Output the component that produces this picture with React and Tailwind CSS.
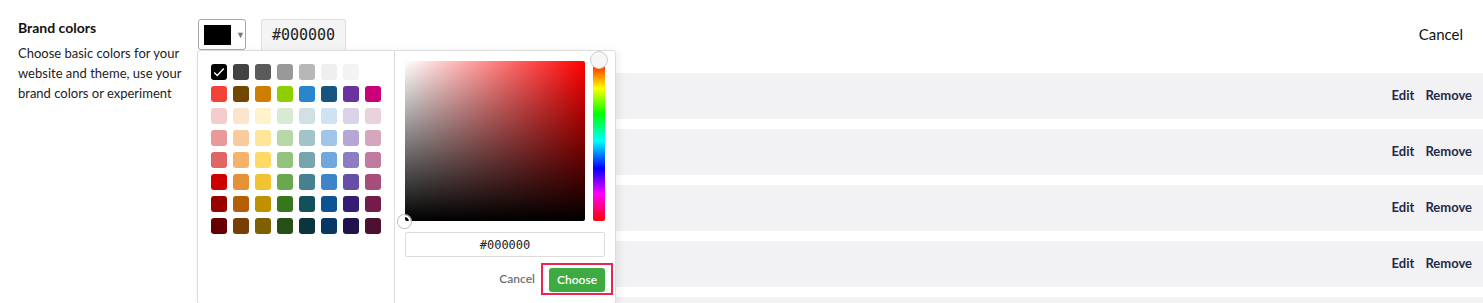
import { useState } from "react";

const palette = [
  ["#000000", "#434343", "#5b5b5b", "#999999", "#b7b7b7", "#efefef", "#f3f3f3", "#ffffff"],
  ["#f44336", "#744700", "#ce7e00", "#8fce00", "#2986cc", "#16537e", "#6a329f", "#c90076"],
  ["#f4cccc", "#fce5cd", "#fff2cc", "#d9ead3", "#d0e0e3", "#cfe2f3", "#d9d2e9", "#ead1dc"],
  ["#ea9999", "#f9cb9c", "#ffe599", "#b6d7a8", "#a2c4c9", "#9fc5e8", "#b4a7d6", "#d5a6bd"],
  ["#e06666", "#f6b26b", "#ffd966", "#93c47d", "#76a5af", "#6fa8dc", "#8e7cc3", "#c27ba0"],
  ["#cc0000", "#e69138", "#f1c232", "#6aa84f", "#45818e", "#3d85c6", "#674ea7", "#a64d79"],
  ["#990000", "#b45f06", "#bf9000", "#38761d", "#134f5c", "#0b5394", "#351c75", "#741b47"],
  ["#660000", "#783f04", "#7f6000", "#274e13", "#0c343d", "#073763", "#20124d", "#4c1130"],
];

function Swatch({ color, selected }) {
  return (
    <button
      className="w-4 h-4 rounded-[3px] flex items-center justify-center"
      style={{ backgroundColor: color }}
    >
      {selected && (
        <svg viewBox="0 0 16 16" className="w-[14px] h-[14px]">
          <path d="M2.5 8.5l3.5 3.5 7.5-8" fill="none" stroke="#fff" strokeWidth="1.6" />
        </svg>
      )}
    </button>
  );
}

function ColorPopover() {
  return (
    <div className="absolute left-[-1px] top-full z-20 flex w-[419px] h-[254px] bg-white border border-[#dcdcdc] rounded-[3px] shadow-[2px_2px_8px_rgba(0,0,0,0.08)]">
      {/* palette */}
      <div className="w-[197px] border-r border-[#dcdcdc] pl-[13px] pt-[13px]">
        <div className="grid grid-cols-[repeat(8,16px)] gap-[6px]">
          {palette.flat().map((c, i) => (
            <Swatch key={i} color={c} selected={i === 0} />
          ))}
        </div>
      </div>

      {/* custom picker */}
      <div className="flex-1 px-[10px] pt-[10px]">
        <div className="flex gap-2">
          <div className="relative w-[180px] h-[160px] rounded-[2px] bg-[linear-gradient(to_top,#000,transparent),linear-gradient(to_right,#fff,#f00)]">
            <div className="absolute left-[-7px] bottom-[-7px] w-[13px] h-[13px] rounded-full border-2 border-white shadow-[0_0_0_1px_#bbb]" />
          </div>
          <div className="relative w-3 h-[160px] rounded-[2px] bg-[linear-gradient(to_bottom,#f00,#ff0_17%,#0f0_33%,#0ff_50%,#00f_67%,#f0f_83%,#f00)]">
            <div className="absolute left-[-3px] top-[-10px] w-[18px] h-[18px] rounded-full bg-[#f6f6f6] border border-[#cfcfcf]" />
          </div>
        </div>
        <div className="mt-[11px] h-[25px] w-[200px] border border-[#dcdcdc] rounded-[2px] flex items-center justify-center font-['DejaVu_Sans_Mono',monospace] text-[12px] text-[#222]">
          #000000
        </div>
        <div className="mt-[6px] flex items-center justify-end">
          <button className="text-[12px] font-semibold text-[#6b6f76] mr-[6px]">Cancel</button>
          <div className="border-2 border-[#e8264f] px-[6px] py-[1px] -mr-[8px]">
            <button className="h-6 w-14 rounded-[3px] bg-[#3dab42] text-white text-[12px] font-semibold">
              Choose
            </button>
          </div>
        </div>
      </div>
    </div>
  );
}

export default function App() {
  const [open] = useState(true);

  return (
    <div className="w-[1483px] h-[303px] overflow-hidden bg-white font-['Lato',sans-serif] flex">
      {/* Left: description */}
      <div className="w-[198px] shrink-0 pl-[18px] pt-[19px]">
        <h3 className="text-[14px] font-bold text-[#111] leading-[18px]">Brand colors</h3>
        <p className="mt-[6px] text-[13px] leading-[20px] text-[#222] w-[170px]">
          Choose basic colors for your website and theme, use your brand colors or experiment
        </p>
      </div>

      {/* Right: picker + list */}
      <div className="flex-1 pt-[19px]">
        <div className="flex items-center h-[31px]">
          <div className="relative">
            <button className="flex items-center h-[31px] w-[48px] border border-[#a8a8a8] rounded-[3px] pl-[5px] gap-[5px]">
              <span className="w-[27px] h-[20px] bg-black" />
              <span className="text-[9px] text-[#777]">▼</span>
            </button>
            {open && <ColorPopover />}
          </div>
          <div className="ml-[15px] h-[31px] w-[85px] bg-[#f4f4f4] border border-[#dedede] border-b-0 rounded-t-[3px] flex items-center justify-center font-['DejaVu_Sans_Mono',monospace] text-[15px] text-[#222]">
            #000000
          </div>
          <button className="ml-auto mr-[20px] text-[15px] text-[#111]">Cancel</button>
        </div>

        <div className="mt-[23px] flex flex-col gap-[10px]">
          {[0, 1, 2, 3].map((i) => (
            <div key={i} className="h-[46px] shrink-0 bg-[#f2f2f4] flex items-center justify-end pr-[11px] gap-[11px] text-[13px] font-bold text-[#1f2a48]">
              <span>Edit</span>
              <span>Remove</span>
            </div>
          ))}
          {/* next row, cut off by the viewport */}
          <div className="h-[46px] shrink-0 bg-[#f2f2f4]" />
        </div>
      </div>
    </div>
  );
}
